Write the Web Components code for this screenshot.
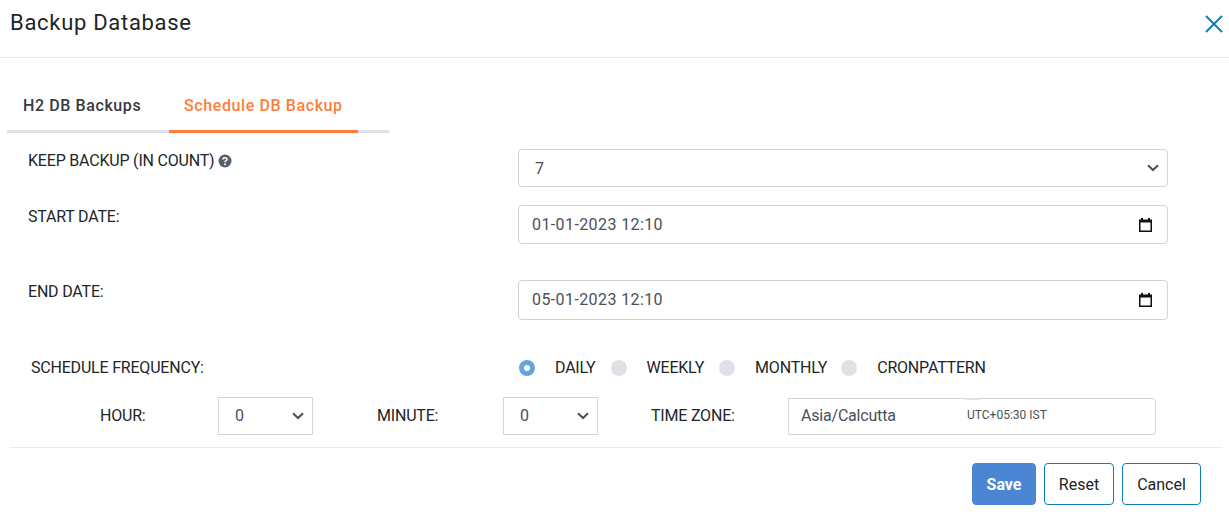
<!doctype html>
<html lang="en">
<head>
  <title>Backup Database</title>
  <style>
    html, body { margin: 0; background: #fff; }
    body { font-family: Roboto, "Liberation Sans", sans-serif; color: #212529; }
  </style>
</head>
<body>
  <template id="dialog-header-template">
    <style>
      :host { display: flex; justify-content: space-between; align-items: center; height: 57px; padding: 0 5px 0 10px; border-bottom: 1px solid #e9ecef; }
      h1 { margin: 0 0 11px; font-size: 22px; font-weight: 400; letter-spacing: .7px; line-height: 28px; color: #212529; }
      svg { display: block; margin-bottom: 9px; }
    </style>
    <h1><slot></slot></h1>
    <svg width="20" height="20" viewBox="0 0 20 20"><path d="M2 2 L18 18 M18 2 L2 18" stroke="#0f7eb5" stroke-width="2" fill="none"/></svg>
  </template>

  <template id="tab-bar-template">
    <style>
      :host { display: flex; width: 382px; margin: 30px 0 0 7px; height: 45px; box-sizing: border-box; border-bottom: 3px solid #dee2e6; }
    </style>
    <slot></slot>
  </template>

  <template id="tab-item-template">
    <style>
      :host { display: block; flex: none; box-sizing: border-box; height: 45px; padding: 8px 0 0 16px; font-size: 16px; font-weight: 500; letter-spacing: .6px; line-height: 19px; white-space: nowrap; color: #343a40; }
      :host([active]) { padding-left: 15px; color: #fd7e3c; border-bottom: 3px solid #fd7e3c; }
    </style>
    <slot></slot>
  </template>

  <template id="form-row-template">
    <style>
      :host { display: grid; grid-template-columns: 490px 650px; padding-left: 28px; }
      .label { font-size: 16px; letter-spacing: -.2px; line-height: 20px; padding-top: 2px; }
    </style>
    <div class="label"><slot name="label"></slot></div>
    <slot></slot>
  </template>

  <template id="field-box-template">
    <style>
      :host { display: flex; align-items: center; justify-content: space-between; box-sizing: border-box; padding: 0 8px 0 16px; border: 1px solid #ced4da; border-radius: 4px; font-size: 16px; color: #495057; background: #fff; }
      :host([kind="date"]) { padding: 0 15px 0 13px; letter-spacing: .4px; }
      :host([kind="date"]) span { margin-bottom: 1px; }
      span { margin-bottom: var(--text-lift, 0); }
      svg { display: block; flex: none; }
      .arrow, .calendar { display: none; }
      :host([kind="select"]) .arrow { display: block; }
      :host([kind="date"]) .calendar { display: block; }
    </style>
    <span><slot></slot></span>
    <svg class="arrow" width="12" height="8" viewBox="0 0 12 8"><path d="M1 1.2 L6 6 L11 1.2" stroke="#495057" stroke-width="2" fill="none"/></svg>
    <svg class="calendar" width="13" height="14" viewBox="0 0 13 14"><path d="M2 0h2v1.5h5V0h2v1.5h2V14H0V1.5h2z M1.5 4.5v8h10v-8z" fill="#111" fill-rule="evenodd"/></svg>
  </template>

  <template id="radio-option-template">
    <style>
      :host { display: flex; align-items: center; font-size: 16px; letter-spacing: -.2px; line-height: 20px; }
      i { display: block; box-sizing: border-box; width: 16px; height: 16px; border-radius: 50%; background: #dee2e6; margin-right: 20px; }
      :host([checked]) i { background: #fff; border: 5px solid #64a3dc; }
    </style>
    <i></i><slot></slot>
  </template>

  <template id="inline-field-template">
    <style>
      :host { display: block; font-size: 16px; letter-spacing: -.2px; line-height: 20px; }
    </style>
    <slot></slot>
  </template>

  <template id="timezone-field-template">
    <style>
      :host { display: block; position: relative; box-sizing: border-box; width: 368px; height: 37px; padding-left: 12px; border: 1px solid #ced4da; border-radius: 0 4px 4px 0; font-size: 16px; letter-spacing: -.2px; line-height: 33px; color: #495057; }
      .offset { position: absolute; left: 178px; top: 0; font-size: 12px; letter-spacing: 0; }
      .tick { position: absolute; left: 177px; top: -1px; width: 13px; height: 2px; background: #dee2e6; }
    </style>
    <slot></slot>
    <span class="tick"></span>
    <span class="offset"><slot name="offset"></slot></span>
  </template>

  <template id="app-button-template">
    <style>
      :host { display: flex; align-items: center; justify-content: center; box-sizing: border-box; height: 42px; border: 1px solid #0f7eb5; border-radius: 4px; font-size: 16px; color: #212529; background: #fff; }
      :host([primary]) { background: #4a86d4; border-color: #4a86d4; color: #fff; font-weight: 700; }
    </style>
    <slot></slot>
  </template>

  <dialog-header>Backup Database</dialog-header>

  <tab-bar>
    <tab-item style="width:162px">H2 DB Backups</tab-item>
    <tab-item active style="width:189px">Schedule DB Backup</tab-item>
  </tab-bar>

  <form-row style="margin-top:16px">
    <span slot="label" style="display:flex;align-items:center;gap:4px">KEEP BACKUP (IN COUNT)
      <svg width="14" height="14" viewBox="0 0 14 14"><circle cx="7" cy="7" r="6.5" fill="#56606b"/><path d="M5 5.4 C5 3.2 9 3.2 9 5.4 C9 6.8 7 6.6 7 8.2" stroke="#fff" stroke-width="1.5" fill="none"/><circle cx="7" cy="10.3" r=".95" fill="#fff"/></svg>
    </span>
    <field-box kind="select" style="height:38px">7</field-box>
  </form-row>

  <form-row style="margin-top:18px">
    <span slot="label">START DATE:</span>
    <field-box kind="date" style="height:39px">01-01-2023 12:10</field-box>
  </form-row>

  <form-row style="margin-top:36px">
    <span slot="label">END DATE:</span>
    <field-box kind="date" style="height:40px">05-01-2023 12:10</field-box>
  </form-row>

  <form-row style="margin-top:38px;padding-left:31px;grid-template-columns:488px 650px">
    <span slot="label" style="display:block;margin-top:-2px">SCHEDULE FREQUENCY:</span>
    <div style="display:flex;height:20px">
      <radio-option checked style="margin-right:15px">DAILY</radio-option>
      <radio-option style="margin-right:15px">WEEKLY</radio-option>
      <radio-option style="margin-right:14px">MONTHLY</radio-option>
      <radio-option>CRONPATTERN</radio-option>
    </div>
  </form-row>

  <div style="display:flex;align-items:center;margin-top:19px;height:38px">
    <inline-field style="margin-left:100px;width:118px">HOUR:</inline-field>
    <field-box kind="select" style="width:95px;height:38px;border-radius:0;--text-lift:2px">0</field-box>
    <inline-field style="margin-left:64px;width:126px">MINUTE:</inline-field>
    <field-box kind="select" style="width:95px;height:38px;border-radius:0;--text-lift:2px">0</field-box>
    <inline-field style="margin-left:53px;width:137px">TIME ZONE:</inline-field>
    <timezone-field>Asia/Calcutta<span slot="offset">UTC+05:30 IST</span></timezone-field>
  </div>

  <div style="display:flex;justify-content:flex-end;gap:8px;margin:12px 7px 0 10px;padding:15px 21px 0 0;border-top:1px solid #e9ecef">
    <app-button primary style="width:64px">Save</app-button>
    <app-button style="width:70px">Reset</app-button>
    <app-button style="width:79px">Cancel</app-button>
  </div>

  <script>
    // every element just clones its template into an open shadow root
    ['dialog-header', 'tab-bar', 'tab-item', 'form-row', 'field-box', 'radio-option',
     'inline-field', 'timezone-field', 'app-button'].forEach((name) => {
      customElements.define(name, class extends HTMLElement {
        constructor() {
          super();
          const templ = document.querySelector('#' + name + '-template');
          this.attachShadow({mode: 'open'}).appendChild(templ.content.cloneNode(true));
        }
      });
    });
  </script>
</body>
</html>
